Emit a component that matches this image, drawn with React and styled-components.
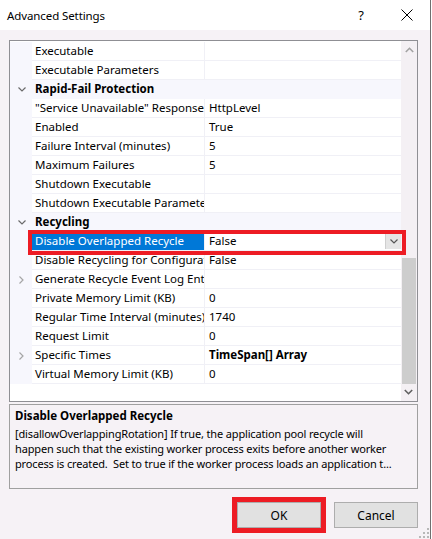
import styled, { createGlobalStyle } from "styled-components"

const GlobalStyle = createGlobalStyle`
  html, body {
    margin: 0;
    padding: 0;
    background: #ffffff;
  }
  * {
    box-sizing: border-box;
  }
`

const Window = styled.div`
  position: relative;
  width: 431px;
  height: 539px;
  background: #f6f2f6;
  border-right: 1px solid #6f6f6f;
  display: flex;
  flex-direction: column;
  font-family: "Noto Sans", "Open Sans", sans-serif;
  font-size: 11.5px;
  color: #000;
`

const TitleBar = styled.div`
  height: 30px;
  background: #ffffff;
  display: flex;
  align-items: center;
  padding-left: 7px;
  font-size: 11.5px;
`

const Title = styled.div`
  flex: 1;
  letter-spacing: -0.1px;
`

const TitleButton = styled.div`
  width: 46px;
  height: 30px;
  display: flex;
  align-items: center;
  justify-content: center;
  font-size: 13px;
`

const Body = styled.div`
  flex: 1;
  display: flex;
  flex-direction: column;
  padding: 10px 12px 0 9px;
`

const Grid = styled.div`
  height: 362px;
  border: 1px solid #8f8f94;
  background: #ffffff;
  display: flex;
`

const Rows = styled.div`
  flex: 1;
  padding-top: 1px;
  background: #ffffff;
`

const Row = styled.div`
  position: relative;
  height: 19px;
  display: grid;
  grid-template-columns: 22px 173px 1fr;
  background: ${(p) => (p.$category ? "#f7f7fd" : "#ffffff")};
`

const Gutter = styled.div`
  background: #f7f7fd;
  display: flex;
  align-items: center;
  justify-content: center;
  padding-left: 1px;
`

const Name = styled.div`
  padding-left: 3px;
  line-height: 18px;
  white-space: nowrap;
  overflow: hidden;
  border-bottom: 1px solid #f0f0f6;
  border-right: 1px solid #f0f0f6;
  background: ${(p) => (p.$selected ? "#0078d7" : "#ffffff")};
  color: ${(p) => (p.$selected ? "#ffffff" : "#000")};
`

const CategoryName = styled.div`
  grid-column: 2 / 4;
  padding-left: 3px;
  line-height: 18px;
  font-weight: 700;
`

const Value = styled.div`
  padding-left: 4px;
  line-height: 18px;
  white-space: nowrap;
  overflow: hidden;
  border-bottom: 1px solid #f0f0f6;
  font-weight: ${(p) => (p.$bold ? 700 : 400)};
  display: flex;
  align-items: flex-start;
`

const ValueText = styled.span`
  flex: 1;
`

const DropButton = styled.div`
  width: 16px;
  height: 15px;
  margin-top: 2px;
  background: #e5e5e5;
  border-left: 1px solid #cfcfcf;
  display: flex;
  align-items: center;
  justify-content: center;
`

const RowMark = styled.div`
  position: absolute;
  left: 18px;
  top: -2px;
  width: 378px;
  height: 25px;
  border: 4px solid #ed1c24;
  pointer-events: none;
  z-index: 2;
`

const Scrollbar = styled.div`
  width: 16px;
  background: #f4f0f4;
  display: flex;
  flex-direction: column;
`

const ScrollArrow = styled.div`
  height: 17px;
  display: flex;
  align-items: center;
  justify-content: center;
`

const Track = styled.div`
  flex: 1;
  display: flex;
  flex-direction: column;
  justify-content: flex-end;
`

const Thumb = styled.div`
  height: 126px;
  margin: 0 1px;
  background: #cdcdcd;
`

const Description = styled.div`
  margin-top: 2px;
  height: 85px;
  border: 1px solid #a0a0a0;
  padding: 3px 5px 0 5px;
  overflow: hidden;
`

const DescTitle = styled.div`
  font-weight: 700;
  line-height: 16px;
`

const DescText = styled.div`
  margin-top: 2px;
  font-size: 11px;
  letter-spacing: -0.15px;
  line-height: 15px;
`

const DescLine = styled.div`
  white-space: pre;
  overflow: hidden;
`

const Footer = styled.div`
  margin-top: 13px;
  display: flex;
  justify-content: flex-end;
  gap: 13px;
`

const Button = styled.div`
  width: 84px;
  height: 26px;
  background: #e1e1e1;
  border: 1px solid #adadad;
  display: flex;
  align-items: center;
  justify-content: center;
  font-size: 12px;
  outline: ${(p) => (p.$marked ? "5px solid #ed1c24" : "none")};
`

const Grip = styled.svg`
  position: absolute;
  right: 1px;
  bottom: 1px;
`

const ChevronDown = ({ color = "#6b6b6b" }) => (
  <svg width="8" height="5" viewBox="0 0 8 5">
    <polyline points="0.5,0.5 4,4 7.5,0.5" fill="none" stroke={color} strokeWidth="1.2" />
  </svg>
)

const ChevronRight = () => (
  <svg width="5" height="8" viewBox="0 0 5 8">
    <polyline points="0.5,0.5 4,4 0.5,7.5" fill="none" stroke="#a6a6a6" strokeWidth="1.2" />
  </svg>
)

const ChevronUp = ({ color }) => (
  <svg width="9" height="6" viewBox="0 0 9 6">
    <polyline points="0.8,5 4.5,1.3 8.2,5" fill="none" stroke={color} strokeWidth="1.6" />
  </svg>
)

const rows = [
  { name: "Executable", value: "" },
  { name: "Executable Parameters", value: "" },
  { category: "Rapid-Fail Protection" },
  { name: "\"Service Unavailable\" Response Type", value: "HttpLevel" },
  { name: "Enabled", value: "True" },
  { name: "Failure Interval (minutes)", value: "5" },
  { name: "Maximum Failures", value: "5" },
  { name: "Shutdown Executable", value: "" },
  { name: "Shutdown Executable Parameters", value: "" },
  { category: "Recycling" },
  { name: "Disable Overlapped Recycle", value: "False", selected: true },
  { name: "Disable Recycling for Configuration Changes", value: "False" },
  { name: "Generate Recycle Event Log Entry", value: "", expandable: true },
  { name: "Private Memory Limit (KB)", value: "0" },
  { name: "Regular Time Interval (minutes)", value: "1740" },
  { name: "Request Limit", value: "0" },
  { name: "Specific Times", value: "TimeSpan[] Array", expandable: true, bold: true },
  { name: "Virtual Memory Limit (KB)", value: "0" },
]

const descLines = [
  "[disallowOverlappingRotation] If true, the application pool recycle will",
  "happen such that the existing worker process exits before another worker",
  "process is created.  Set to true if the worker process loads an application t...",
]

const PropertyRow = ({ row }) => {
  if (row.category) {
    return (
      <Row $category>
        <Gutter>
          <ChevronDown />
        </Gutter>
        <CategoryName>{row.category}</CategoryName>
      </Row>
    )
  }
  return (
    <Row>
      <Gutter>{row.expandable && <ChevronRight />}</Gutter>
      <Name $selected={row.selected}>{row.name}</Name>
      <Value $bold={row.bold}>
        <ValueText>{row.value}</ValueText>
        {row.selected && (
          <DropButton>
            <ChevronDown color="#555" />
          </DropButton>
        )}
      </Value>
      {row.selected && <RowMark />}
    </Row>
  )
}

const App = () => {
  return (
    <>
      <GlobalStyle />
      <Window>
        <TitleBar>
          <Title>Advanced Settings</Title>
          <TitleButton>?</TitleButton>
          <TitleButton>
            <svg width="12" height="12" viewBox="0 0 12 12">
              <path d="M0.5 0.5 L11.5 11.5 M11.5 0.5 L0.5 11.5" stroke="#000" strokeWidth="1" />
            </svg>
          </TitleButton>
        </TitleBar>
        <Body>
          <Grid>
            <Rows>
              {rows.map((row, i) => (
                <PropertyRow key={i} row={row} />
              ))}
            </Rows>
            <Scrollbar>
              <ScrollArrow>
                <ChevronUp color="#a3a3a3" />
              </ScrollArrow>
              <Track>
                <Thumb />
              </Track>
              <ScrollArrow style={{ transform: "rotate(180deg)" }}>
                <ChevronUp color="#606060" />
              </ScrollArrow>
            </Scrollbar>
          </Grid>
          <Description>
            <DescTitle>Disable Overlapped Recycle</DescTitle>
            <DescText>
              {descLines.map((line, i) => (
                <DescLine key={i}>{line}</DescLine>
              ))}
            </DescText>
          </Description>
          <Footer>
            <Button $marked>OK</Button>
            <Button>Cancel</Button>
          </Footer>
        </Body>
        <Grip width="10" height="10" viewBox="0 0 10 10">
          <rect x="8" y="0" width="2" height="2" fill="#b8b8b8" />
          <rect x="4" y="4" width="2" height="2" fill="#b8b8b8" />
          <rect x="8" y="4" width="2" height="2" fill="#b8b8b8" />
          <rect x="0" y="8" width="2" height="2" fill="#b8b8b8" />
          <rect x="4" y="8" width="2" height="2" fill="#b8b8b8" />
          <rect x="8" y="8" width="2" height="2" fill="#b8b8b8" />
        </Grip>
      </Window>
    </>
  )
}

export default App
